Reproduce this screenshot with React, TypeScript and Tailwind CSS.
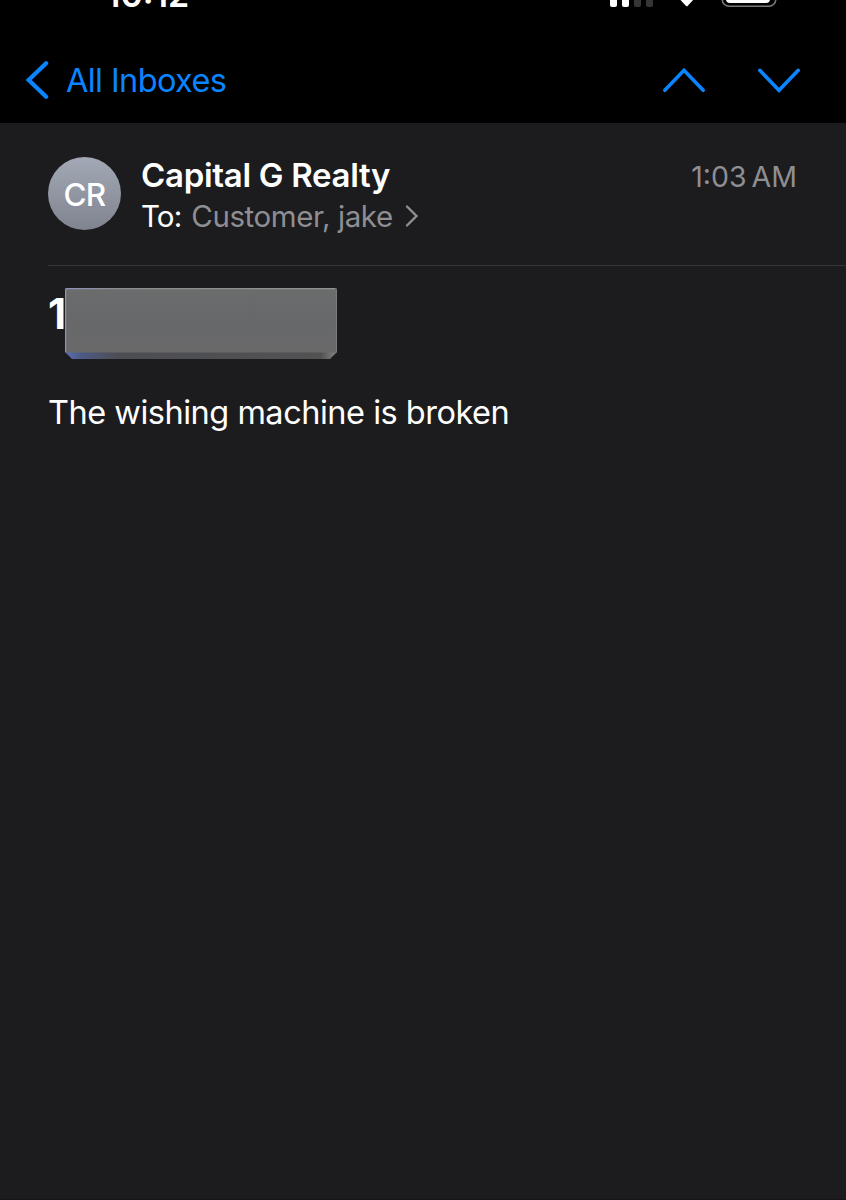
import type { ReactNode } from 'react';

interface Message {
  initials: string;
  sender: string;
  recipients: string;
  time: string;
  body: string;
}

const message: Message = {
  initials: 'CR',
  sender: 'Capital G Realty',
  recipients: 'Customer, jake',
  time: '1:03 AM',
  body: 'The wishing machine is broken',
};

function StatusBar() {
  return (
    <div className="h-9 flex justify-between items-start pl-[106px] pr-[69px] overflow-hidden">
      <span className="-mt-[25px] text-[34px] leading-[40px] font-semibold text-white">10:12</span>
      <svg className="w-[168px] h-9 shrink-0" viewBox="0 0 168 36" fill="none">
        {/* Signal bars */}
        <rect x="1" y="-10" width="7" height="17" rx="2" fill="#fff" />
        <rect x="13" y="-14" width="7" height="21" rx="2" fill="#fff" />
        <rect x="25" y="-17" width="7" height="24" rx="2" fill="#353535" />
        <rect x="37" y="-20" width="7" height="27" rx="2" fill="#353535" />
        {/* Wi-Fi tip */}
        <path d="M71.500 0 L76.800 5.700 Q77.800 6.700 78.800 5.700 L84.100 0 Z" fill="#fff" />
        {/* Battery */}
        <rect x="113.200" y="-18" width="53.600" height="24.300" rx="7" stroke="#777" strokeWidth="1.600" />
        <rect x="117" y="-15" width="44" height="18" rx="4" fill="#fff" />
      </svg>
    </div>
  );
}

function NavBar() {
  return (
    <div className="h-[87px] flex items-center pl-[25px] pr-[45px] text-[#0a84ff]">
      <Stroke className="w-6 h-10" box="0 0 24 40" width={4.2}>
        <path d="M21.100 3.300 L3.700 20 L21.100 36.700" />
      </Stroke>
      <span className="ml-[17px] pt-[2px] text-[32.500px] tracking-[-0.600px] leading-10">All Inboxes</span>
      <div className="ml-auto flex gap-[51px]">
        <Stroke className="w-11 h-[26px]" box="0 0 44 26" width={3.6}>
          <path d="M2.800 23.300 L22 3.300 L41.200 23.300" />
        </Stroke>
        <Stroke className="w-11 h-[26px]" box="0 0 44 26" width={3.6}>
          <path d="M2.800 3.300 L22 23.300 L41.200 3.300" />
        </Stroke>
      </div>
    </div>
  );
}

interface StrokeProps {
  className: string;
  box: string;
  width: number;
  children: ReactNode;
}

function Stroke({ className, box, width, children }: StrokeProps) {
  return (
    <svg
      className={className}
      viewBox={box}
      fill="none"
      stroke="currentColor"
      strokeWidth={width}
      strokeLinecap="round"
      strokeLinejoin="miter"
    >
      {children}
    </svg>
  );
}

function MessageHeader() {
  return (
    <div className="ml-12 h-[143px] flex items-start pt-[34px] pr-[49px] border-b border-[#343436]">
      <div className="w-[73px] h-[73px] pt-[2px] rounded-full bg-linear-to-b from-[#a3a8b6] to-[#80848f] flex items-center justify-center text-[31.500px] tracking-[-0.800px] font-medium text-white">
        {message.initials}
      </div>
      <div className="ml-[20px] -mt-[2px]">
        <h1 className="text-[33px] leading-10 tracking-[-0.300px] font-semibold text-white">{message.sender}</h1>
        <div className="pt-px flex items-center text-[29.500px] leading-10 tracking-[-0.400px] text-white">
          <span className="tracking-[-0.900px]">To:</span>
          <span className="ml-[10px] text-[#8e8e93]">{message.recipients}</span>
          <Stroke className="ml-[12px] w-[14px] h-[22px] text-[#8e8e93]" box="0 0 14 22" width={2.4}>
            <path d="M2 1.500 L11.500 11 L2 20.500" />
          </Stroke>
        </div>
      </div>
      <span className="ml-auto text-[28.500px] leading-10 [word-spacing:-3px] text-[#8e8e93]">{message.time}</span>
    </div>
  );
}

function RedactedSubject() {
  return (
    <div className="flex items-start pl-12 pt-[22px]">
      <span className="w-[17px] overflow-hidden text-[42px] leading-[52px] font-bold text-white">1</span>
      {/* Beveled cover over the rest of the subject */}
      <svg className="w-[272px] h-[71px]" viewBox="0 0 272 71">
        <defs>
          <linearGradient id="face" x1="0" y1="0" x2="0" y2="1">
            <stop offset="0" stopColor="#6b6c6c" />
            <stop offset="0.500" stopColor="#67686a" />
            <stop offset="1" stopColor="#69696a" />
          </linearGradient>
          <linearGradient id="edge" x1="0" y1="0" x2="1" y2="0">
            <stop offset="0" stopColor="#5a70b5" />
            <stop offset="0.060" stopColor="#4e5a85" />
            <stop offset="0.200" stopColor="#4c4d52" />
            <stop offset="0.940" stopColor="#525253" />
            <stop offset="1" stopColor="#858586" />
          </linearGradient>
          <linearGradient id="rim" x1="0" y1="0" x2="1" y2="0">
            <stop offset="0" stopColor="#8c92c0" />
            <stop offset="0.200" stopColor="#8c8d90" />
            <stop offset="1" stopColor="#929292" />
          </linearGradient>
        </defs>
        <path d="M0 2 Q0 0 2 0 H270 Q272 0 272 2 V64 L265 71 H7 L0 64 Z" fill="url(#edge)" />
        <path d="M0 2 Q0 0 2 0 H270 Q272 0 272 2 V64.500 H0 Z" fill="url(#face)" />
        <path d="M0.600 64 V2 Q0.600 0.700 2 0.700 H270" fill="none" stroke="url(#rim)" strokeWidth="1.200" />
        <path d="M271.400 2 V64" stroke="#7e7e7e" />
      </svg>
    </div>
  );
}

export default function App() {
  return (
    <div className="w-full h-[1200px] flex flex-col overflow-hidden bg-[#1c1c1e] border-b border-[#18121a] font-['Inter',sans-serif]">
      <header className="bg-black">
        <StatusBar />
        <NavBar />
      </header>
      <main className="flex-1">
        <MessageHeader />
        <RedactedSubject />
        <p className="pl-12 pt-[34px] text-[32.500px] leading-10 tracking-[-0.490px] text-white">{message.body}</p>
      </main>
    </div>
  );
}
